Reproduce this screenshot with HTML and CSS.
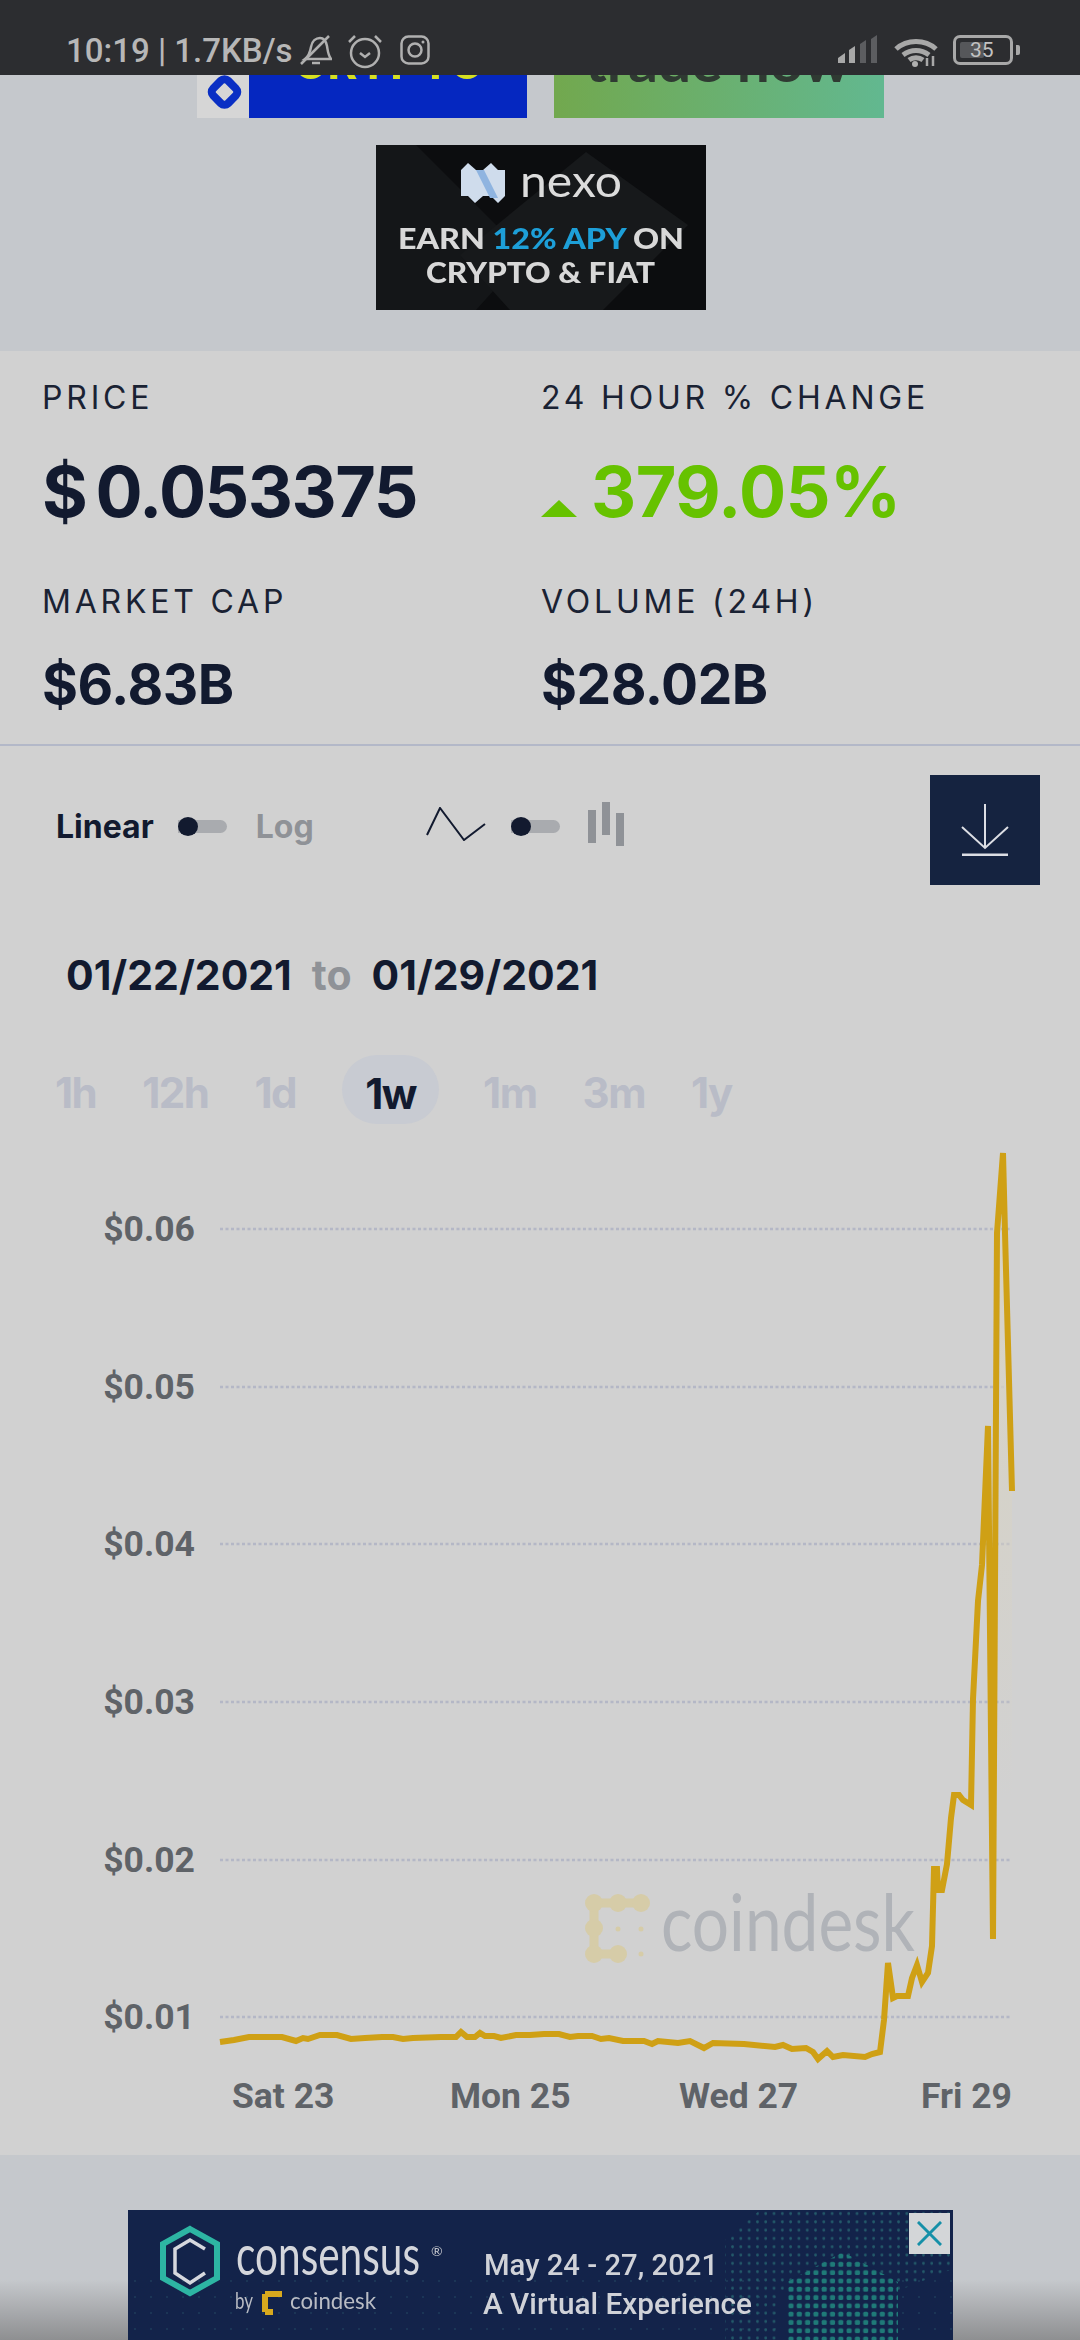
FILE: index.html
```html
<!DOCTYPE html>
<html lang="en">

<head>
  <meta charset="UTF-8">
  <meta name="viewport" content="width=device-width, initial-scale=1.0">
  <title>Price chart</title>

  <link rel="stylesheet" href="styles.css">
</head>

<body>
  <header class="status">
    <span class="status-text">10:19 | 1.7KB/s</span>
    <svg class="status-icon bell" viewBox="0 0 32 32">
      <path d="M5 26c4-3 5-6 6-12 1-6 5-9 9-9 4 0 6 3 7 8 1 6 1 9 4 13H5z" />
      <path d="M1 31 29 3" />
      <path d="M12 30h8" />
    </svg>
    <svg class="status-icon alarm" viewBox="0 0 36 36">
      <circle cx="18" cy="20" r="14" />
      <path d="M13 20l5 4 5-4" />
      <path d="M2 9 8 3M34 9l-6-6" />
    </svg>
    <svg class="status-icon insta" viewBox="0 0 30 30">
      <rect x="1.5" y="1.5" width="27" height="27" rx="7" />
      <circle cx="15" cy="15" r="6.5" />
      <circle class="solid" cx="23" cy="7" r="1.5" />
    </svg>
    <div class="status-right">
      <svg class="signal" viewBox="0 0 40 28">
        <path class="on" d="M0 28v-5l7-5v10z" />
        <path class="on" d="M11 28V15l6-4v17z" />
        <path class="off" d="M22 28V9l6-4v23zM33 28V4l6-4v28z" />
      </svg>
      <svg class="wifi" viewBox="0 0 44 30">
        <path d="M2 13C13 3 31 3 42 13" />
        <path d="M9 19c8-6 18-6 26 0" />
        <path d="M15 24c4-3 10-3 14 0" />
        <circle class="solid" cx="21" cy="28" r="3" />
        <path class="updown" d="M33 22v8M39 20v10" />
      </svg>
      <div class="battery">
        <span class="battery-level"></span>
        <span class="battery-num">35</span>
      </div>
      <span class="battery-nub"></span>
    </div>
  </header>

  <section class="ad-zone">
    <div class="ad-row">
      <svg class="ad-small" viewBox="197 75 330 43">
        <rect x="197" y="75" width="330" height="43" fill="#0527c0" />
        <rect x="197" y="75" width="52" height="43" fill="#d6d6d6" />
        <rect x="214" y="81.500" width="21" height="21" rx="5" transform="rotate(45 224.500 92)" fill="none" stroke="#0a2fc4" stroke-width="8" />
        <text x="293" y="79" class="crypto" textLength="192" lengthAdjust="spacingAndGlyphs">CRYPTO</text>
      </svg>
      <svg class="ad-small" viewBox="554 75 330 43">
        <defs>
          <linearGradient id="greenAd" x1="0" x2="1" y1="0" y2="0">
            <stop offset="0" stop-color="#72a84e" />
            <stop offset="1" stop-color="#62b890" />
          </linearGradient>
        </defs>
        <rect x="554" y="75" width="330" height="43" fill="url(#greenAd)" />
        <text x="585" y="82" class="trade" textLength="265" lengthAdjust="spacingAndGlyphs">trade now</text>
      </svg>
    </div>

    <svg class="ad-nexo" viewBox="376 145 330 165">
      <rect x="376" y="145" width="330" height="165" fill="#0c0d0f" />
      <path d="M376 145h40l110 110-50 55H376z" fill="#141618" />
      <path d="M586 152l102 73-85 85H510l-50-55z" fill="#17191b" />
      <path d="M461 170l7-7 8 7 7 0 8-7 7 7 7 0v26l-7 7-7-7h-8l-8 7-7-7-7 0z" fill="#cfdcec" />
      <path d="M476 170l14 28h8l-14-28z" fill="#8fb4e0" />
      <text x="520" y="197" class="nexo-word" textLength="102" lengthAdjust="spacingAndGlyphs">nexo</text>
      <text x="398" y="249" class="nexo-line" textLength="286" lengthAdjust="spacingAndGlyphs">EARN <tspan fill="#1d9fd8">12% APY</tspan> ON</text>
      <text x="426" y="283" class="nexo-line" textLength="229" lengthAdjust="spacingAndGlyphs">CRYPTO &amp; FIAT</text>
    </svg>
  </section>

  <section class="stats">
    <div class="stat">
      <div class="stat-label">PRICE</div>
      <div class="stat-big price-value">$ 0.053375</div>
    </div>
    <div class="stat">
      <div class="stat-label">24 HOUR % CHANGE</div>
      <div class="stat-big up"><span class="arrow"></span>379.05%</div>
    </div>
    <div class="stat">
      <div class="stat-label">MARKET CAP</div>
      <div class="stat-mid">$6.83B</div>
    </div>
    <div class="stat">
      <div class="stat-label">VOLUME (24H)</div>
      <div class="stat-mid">$28.02B</div>
    </div>
  </section>

  <section class="panel">
    <div class="controls">
      <span class="scale-on">Linear</span>
      <span class="toggle"><i></i></span>
      <span class="scale-off">Log</span>
      <svg class="line-icon" viewBox="0 0 60 34">
        <path d="M1 28 14 1l24 32 21-16" />
      </svg>
      <span class="toggle"><i></i></span>
      <svg class="bars-icon" viewBox="0 0 36 44">
        <rect x="0" y="8" width="8" height="33" />
        <rect x="14" y="0" width="8" height="33" />
        <rect x="28" y="11" width="8" height="33" />
      </svg>
      <button class="download">
        <svg viewBox="0 0 48 52">
          <path d="M24 0v44M1 23l23 21 23-21" />
          <path d="M1 51h46" />
        </svg>
      </button>
    </div>

    <div class="dates">
      <span>01/22/2021</span>
      <span class="dates-to">to</span>
      <span>01/29/2021</span>
    </div>

    <div class="ranges">
      <span class="range">1h</span>
      <span class="range">12h</span>
      <span class="range">1d</span>
      <span class="range active">1w</span>
      <span class="range">1m</span>
      <span class="range">3m</span>
      <span class="range">1y</span>
    </div>

    <svg class="chart" viewBox="0 1130 1080 1000">
      <defs>
        <linearGradient id="areaFill" x1="0" x2="0" y1="0" y2="1">
          <stop offset="0" stop-color="#d8d3c4" />
          <stop offset="1" stop-color="#d8d3c4" stop-opacity="0" />
        </linearGradient>
      </defs>

      <path class="grid" d="M220 1229H1010M220 1387H1010M220 1544H1010M220 1702H1010M220 1860H1010M220 2017H1010" />

      <text class="y-label" x="195" y="1241">$0.06</text>
      <text class="y-label" x="195" y="1399">$0.05</text>
      <text class="y-label" x="195" y="1556">$0.04</text>
      <text class="y-label" x="195" y="1714">$0.03</text>
      <text class="y-label" x="195" y="1872">$0.02</text>
      <text class="y-label" x="195" y="2029">$0.01</text>

      <text class="x-label" x="232" y="2108">Sat 23</text>
      <text class="x-label" x="450" y="2108">Mon 25</text>
      <text class="x-label" x="679" y="2108">Wed 27</text>
      <text class="x-label" x="921" y="2108">Fri 29</text>

      <g class="mark-logo">
        <path d="M594 1954h24M594 1903v51M594 1903h47" />
        <circle cx="594" cy="1903" r="9" />
        <circle cx="618" cy="1903" r="9" />
        <circle cx="641" cy="1903" r="9" />
        <circle cx="594" cy="1928" r="9" />
        <circle cx="594" cy="1954" r="9" />
        <circle cx="618" cy="1954" r="9" />
        <circle cx="618" cy="1929" r="2.500" />
        <circle cx="641" cy="1929" r="2.500" />
        <circle cx="641" cy="1954" r="2.500" />
      </g>
      <text class="mark-word" x="661" y="1951" textLength="254" lengthAdjust="spacingAndGlyphs">coindesk</text>

      <path d="M1000 1240L1005 1240L1012 1491V1800H1000z" fill="url(#areaFill)" />

      <polyline class="price" points="220,2042 234,2040 249,2037 265,2037 282,2037 296,2041 303,2038 308,2039 320,2035 337,2035 351,2039 365,2038 382,2037 393,2037 403,2039 413,2038 441,2037 456,2037 461,2032 467,2037 475,2037 480,2033 485,2036 494,2036 501,2038 516,2035 530,2035 544,2034 559,2034 570,2037 578,2036 592,2036 601,2039 609,2038 623,2041 644,2041 652,2044 658,2041 678,2043 690,2041 704,2048 713,2043 744,2044 775,2047 783,2045 792,2049 806,2048 813,2052 818,2059 827,2051 833,2057 843,2055 865,2057 872,2054 880,2052 884,2020 888,1963 893,1998 897,1996 908,1996 912,1978 917,1965 922,1982 928,1973 932,1946 934,1869 937,1869 938,1890 942,1890 947,1864 951,1818 954,1795 959,1795 963,1800 971,1805 973,1699 978,1601 982,1565 988,1426 993,1939 997,1233 1003,1153 1005,1233 1012,1491" />
    </svg>
  </section>

  <section class="bottom-zone">
    <div class="ad-banner">
      <svg class="banner-art" viewBox="128 2210 825 130">
        <defs>
          <pattern id="dotsBright" x="787" y="2252" width="8.300" height="8.300" patternUnits="userSpaceOnUse">
            <rect x="1.500" y="1.500" width="5" height="5" rx="1.500" fill="#1f7a78" />
          </pattern>
          <pattern id="dotsFaint" x="720" y="2210" width="8.300" height="8.300" patternUnits="userSpaceOnUse">
            <rect x="3" y="2" width="2.500" height="3" rx="1" fill="#235a6a" />
          </pattern>
          <pattern id="dotsDim" x="128" y="2210" width="16" height="16" patternUnits="userSpaceOnUse">
            <rect x="6" y="6" width="2" height="2" fill="#1b3556" />
          </pattern>
          <clipPath id="hexClip">
            <path d="M787 2340V2282L843 2252 898 2282V2340z" />
          </clipPath>
        </defs>
        <rect x="128" y="2210" width="825" height="130" fill="#13234a" />
        <rect x="128" y="2280" width="825" height="60" fill="url(#dotsDim)" />
        <path d="M725 2340V2240L760 2210H950V2270L900 2290H780V2340z" fill="url(#dotsFaint)" />
        <rect x="787" y="2252" width="112" height="88" fill="#13234a" clip-path="url(#hexClip)" />
        <rect x="787" y="2252" width="112" height="88" fill="url(#dotsBright)" clip-path="url(#hexClip)" />

        <path d="M190 2229l27 15v34l-27 15-27-15v-34z" fill="none" stroke="#2db5a3" stroke-width="6" />
        <path d="M205 2249l-15-9-15 9v24l15 10 15-10" fill="none" stroke="#d6d8de" stroke-width="3.500" />
        <text class="cons-word" x="236" y="2275" textLength="184" lengthAdjust="spacingAndGlyphs">consensus</text>
        <text class="cons-mark" x="431" y="2256">®</text>
        <text class="cons-small" x="235" y="2309" textLength="18" lengthAdjust="spacingAndGlyphs">by</text>
        <path d="M265 2294h17M265 2294v18M265 2312h8" fill="none" stroke="#d8a91e" stroke-width="6" />
        <text class="cons-small" x="290" y="2309" textLength="86" lengthAdjust="spacingAndGlyphs">coindesk</text>
        <text class="cons-date" x="484" y="2275" textLength="234" lengthAdjust="spacingAndGlyphs">May 24 - 27, 2021</text>
        <text class="cons-date" x="483" y="2314" textLength="269" lengthAdjust="spacingAndGlyphs">A Virtual Experience</text>
      </svg>
      <button class="ad-close">
        <svg viewBox="0 0 26 26">
          <path d="M1 1l24 24M25 1L1 25" />
        </svg>
      </button>
    </div>
  </section>
</body>

</html>
```

FILE: styles.css
```css
* {
  box-sizing: border-box;
}

html,
body {
  margin: 0;
  padding: 0;
}

body {
  width: 1080px;
  height: 2340px;
  overflow: hidden;
  background: #c5c8cc;
  font-family: Inter, "Liberation Sans", sans-serif;
  color: #121a2f;
}

svg {
  display: block;
}

/* status bar */

.status {
  height: 75px;
  padding: 33px 60px 0 66px;
  display: flex;
  align-items: flex-start;
  background: #2c2d30;
}

.status-text {
  width: 234px;
  font: 500 33px/36px Roboto, sans-serif;
  color: #b7b7b7;
  white-space: nowrap;
}

.status-icon {
  fill: none;
  stroke: #b0b0b0;
  stroke-width: 2.500;
}

.status-icon .solid,
.wifi .solid {
  fill: #b0b0b0;
  stroke: none;
}

.bell {
  width: 32px;
  height: 32px;
  margin-right: 15px;
}

.alarm {
  width: 36px;
  height: 36px;
  margin-right: 17px;
}

.insta {
  width: 30px;
  height: 30px;
  margin-top: 2px;
}

.status-right {
  margin-left: auto;
  display: flex;
  align-items: flex-start;
}

.signal {
  width: 40px;
  height: 28px;
  margin: 2px 16px 0 0;
}

.signal .on {
  fill: #a8a8a8;
}

.signal .off {
  fill: #5c5d60;
}

.wifi {
  width: 44px;
  height: 32px;
  margin: 2px 15px 0 0;
  fill: none;
  stroke: #a8a8a8;
  stroke-width: 5;
}

.wifi .updown {
  stroke-width: 2.500;
}

.battery {
  position: relative;
  width: 60px;
  height: 30px;
  margin-top: 2px;
  border: 3px solid #a8a8a8;
  border-radius: 7px;
}

.battery-level {
  position: absolute;
  left: 4px;
  top: 4px;
  width: 24px;
  height: 16px;
  border-radius: 2px;
  background: #56575a;
}

.battery-num {
  position: absolute;
  left: 14px;
  top: 2px;
  font: 400 21px/20px Roboto, sans-serif;
  color: #c2c2c2;
}

.battery-nub {
  width: 4px;
  height: 10px;
  margin: 12px 0 0 3px;
  border-radius: 0 2px 2px 0;
  background: #a8a8a8;
}

/* top ads */

.ad-zone {
  height: 276px;
  background: #c5c8cc;
}

.ad-row {
  display: flex;
  justify-content: center;
  gap: 27px;
  padding-left: 1px;
}

.ad-small {
  width: 330px;
  height: 43px;
  filter: blur(0.6px);
}

.crypto {
  font: 700 48px Inter, sans-serif;
  fill: #d6e021;
}

.trade {
  font: 700 56px Lato, sans-serif;
  fill: #2f3a32;
}

.ad-nexo {
  width: 330px;
  height: 165px;
  margin: 27px 0 0 376px;
}

.ad-nexo text {
  filter: blur(0.6px);
}

.nexo-word {
  font: 400 44px Lato, sans-serif;
  fill: #dcdcdc;
}

.nexo-line {
  font: 900 28px Lato, sans-serif;
  fill: #d8d8d8;
}

/* stats */

.stats {
  height: 395px;
  padding: 29px 42px 0;
  display: grid;
  grid-template-columns: 499px 1fr;
  grid-template-rows: 204px 1fr;
  background: #d1d1d1;
  border-bottom: 2px solid #b3b8c8;
}

.stat-label {
  font-size: 32px;
  line-height: 36px;
  font-weight: 400;
  letter-spacing: 3.800px;
  color: #1a2233;
}

.stat-big {
  margin-top: 34px;
  display: flex;
  align-items: flex-end;
  font-size: 70px;
  line-height: 84px;
  font-weight: 700;
  white-space: pre;
  letter-spacing: -0.500px;
}

.price-value {
  letter-spacing: -1.500px;
  word-spacing: -6px;
}

.stat-mid {
  margin-top: 31px;
  font-size: 55px;
  line-height: 66px;
  font-weight: 700;
  letter-spacing: -0.500px;
}

.up {
  color: #66c200;
}

.arrow {
  width: 0;
  height: 0;
  margin: 0 14px 17px 0;
  border-left: 18.500px solid transparent;
  border-right: 18.500px solid transparent;
  border-bottom: 17px solid #66c200;
}

/* chart panel */

.panel {
  height: 1409px;
  background: #d1d1d1;
}

.controls {
  height: 138px;
  padding: 29px 40px 0 56px;
  display: flex;
  align-items: flex-start;
}

.scale-on,
.scale-off {
  margin-top: 32px;
  font-size: 32px;
  line-height: 40px;
  font-weight: 700;
}

.scale-off {
  margin-left: 29px;
  color: #8f9297;
}

.toggle {
  position: relative;
  display: block;
  width: 49px;
  height: 13px;
  margin: 45px 0 0 24px;
  border-radius: 0 7px 7px 0;
  background: #a9abaf;
}

.toggle i {
  position: absolute;
  left: 0;
  top: -3px;
  width: 20px;
  height: 19px;
  border-radius: 50%;
  background: #121a2f;
}

.line-icon {
  width: 60px;
  height: 34px;
  margin: 32px 0 0 112px;
  fill: none;
  stroke: #121a2f;
  stroke-width: 2;
}

.line-icon + .toggle {
  margin-left: 25px;
}

.bars-icon {
  width: 36px;
  height: 44px;
  margin: 27px 0 0 28px;
  fill: #8f9297;
}

.download {
  width: 110px;
  height: 110px;
  margin-left: auto;
  padding: 0;
  border: 0;
  background: #152340;
}

.download svg {
  width: 48px;
  height: 52px;
  margin: 0 auto;
  fill: none;
  stroke: #dcdee4;
  stroke-width: 2;
}

.download svg path:last-child {
  stroke-width: 3;
}

.dates {
  margin-top: 67px;
  padding-left: 66px;
  display: flex;
  gap: 20px;
  font-size: 41px;
  line-height: 48px;
  font-weight: 700;
}

.dates-to {
  color: #8f9297;
}

.ranges {
  margin-top: 56px;
  padding-left: 55px;
  height: 69px;
  display: flex;
  align-items: center;
  gap: 46px;
  font-size: 42px;
  font-weight: 700;
  letter-spacing: -1.500px;
  color: #b9bcc7;
}

.range {
  line-height: 52px;
  margin-top: 6px;
}

.active {
  width: 97px;
  height: 69px;
  margin: 0 -2px 0 0;
  border-radius: 35px;
  background: #c8cbd2;
  color: #121a2f;
  line-height: 78px;
  text-align: center;
}

.chart {
  width: 1080px;
  height: 1000px;
  margin-top: 6px;
}

.grid {
  fill: none;
  stroke: #b4b7c6;
  stroke-width: 2.500;
  stroke-dasharray: 3 2.500;
}

.y-label {
  font: 700 35.500px Roboto, sans-serif;
  fill: #5f6368;
  text-anchor: end;
}

.x-label {
  font: 700 35.500px Roboto, sans-serif;
  fill: #5f6368;
}

.mark-logo {
  fill: #d6cca8;
}

.mark-logo path {
  fill: none;
  stroke: #d6cca8;
  stroke-width: 9;
}

.mark-word {
  font: 400 80px Lato, sans-serif;
  fill: #b0b3b8;
}

.price {
  fill: none;
  stroke: #cfa015;
  stroke-width: 6;
}

/* bottom ad */

.bottom-zone {
  height: 185px;
  padding: 55px 0 0 128px;
  background: linear-gradient(#c5c8cc 0, #c5c8cc 125px, #8e8f91 185px);
}

.ad-banner {
  position: relative;
  width: 825px;
  height: 130px;
}

.banner-art {
  width: 825px;
  height: 130px;
}

.banner-art text {
  filter: blur(0.6px);
}

.cons-word {
  font: 400 56px Lato, sans-serif;
  fill: #d4d6dc;
}

.cons-mark {
  font: 400 14px Lato, sans-serif;
  fill: #c4c6cc;
}

.cons-small {
  font: 400 24px Lato, sans-serif;
  fill: #b9bcc4;
}

.cons-date {
  font: 500 29px Roboto, sans-serif;
  fill: #d0d2d8;
}

.ad-close {
  position: absolute;
  top: 3px;
  right: 3px;
  width: 41px;
  height: 41px;
  padding: 8px;
  border: 0;
  background: #d3d6d8;
}

.ad-close svg {
  width: 25px;
  height: 25px;
  fill: none;
  stroke: #1590a8;
  stroke-width: 3;
}
```
